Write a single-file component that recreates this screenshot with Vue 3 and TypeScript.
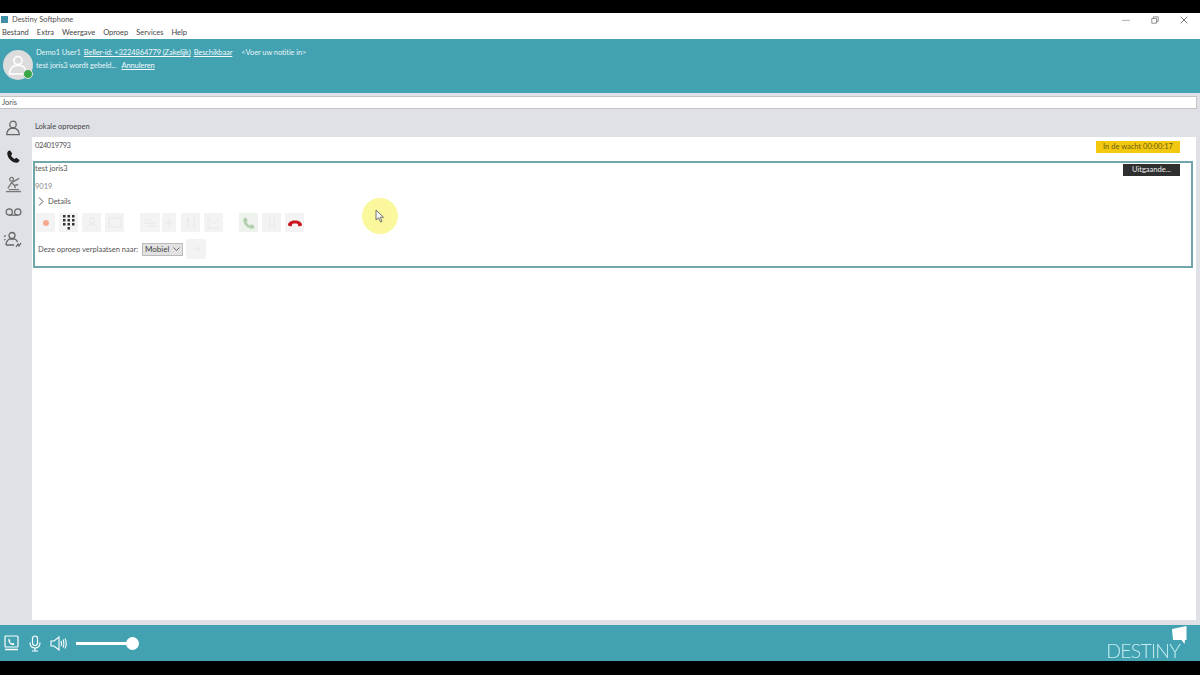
<script setup lang="ts">
const menus = ['Bestand', 'Extra', 'Weergave', 'Oproep', 'Services', 'Help']
</script>

<template>
  <div class="screen">
    <div class="letterbox top"></div>
    <div class="window">
      <div class="titlebar">
        <span class="app-icon"></span>
        <span class="app-title">Destiny Softphone</span>
        <div class="win-buttons">
          <svg width="8" height="8" viewBox="0 0 10 10"><path d="M0 5.5H10" stroke="#999" fill="none" /></svg>
          <svg width="8" height="8" viewBox="0 0 10 10"><path d="M1 3H7V9H1ZM3 3V1H9V7H7" stroke="#777" fill="none" /></svg>
          <svg width="8" height="8" viewBox="0 0 10 10"><path d="M1 1L9 9M9 1L1 9" stroke="#555" fill="none" /></svg>
        </div>
      </div>
      <nav class="menubar">
        <span v-for="m in menus" :key="m">{{ m }}</span>
      </nav>

      <header class="status">
        <div class="avatar">
          <svg width="22" height="22" viewBox="0 0 22 22">
            <circle cx="11" cy="6.5" r="4" fill="none" stroke="#fff" stroke-width="1.6" />
            <path d="M2.5 20c0-5 3-7.500 5.500-8.500h6c2.500 1 5.500 3.500 5.500 8.500z" fill="none" stroke="#fff" stroke-width="1.6" />
          </svg>
          <span class="presence"></span>
        </div>
        <div class="status-text">
          <div class="status-line first">
            <span>Demo1 User1</span>
            <a>Beller-id: +3224864779 (Zakelijk)</a>
            <a>Beschikbaar</a>
            <span class="note">&lt;Voer uw notitie in&gt;</span>
          </div>
          <div class="status-line second">
            <span>test joris3 wordt gebeld...</span>
            <a>Annuleren</a>
          </div>
        </div>
      </header>

      <div class="search-wrap">
        <div class="search">Joris</div>
      </div>

      <div class="main">
        <aside class="sidebar">
          <span class="side-slot">
            <svg width="16" height="16" viewBox="0 0 18 18">
              <circle cx="9" cy="5" r="3.600" fill="none" stroke="#666" stroke-width="1.400" />
              <path d="M2 16.500c0-4 2-6 4.500-7h5c2.500 1 4.500 3 4.500 7z" fill="none" stroke="#666" stroke-width="1.400" />
            </svg>
          </span>
          <span class="side-slot">
            <svg width="15" height="15" viewBox="0 0 24 24">
              <path d="M6.600 2.500 10 7.500 8 10.500c1 2.300 3.200 4.500 5.500 5.500l3-2 5 3.400c.3 1.800-1.700 4.600-4.500 4.600C9.500 21.500 2.500 14.500 2 7c0-2.500 2.500-4.800 4.600-4.500z" fill="#1d1d1d" />
            </svg>
          </span>
          <span class="side-slot">
            <svg width="17" height="17" viewBox="0 0 18 18">
              <path d="M1 16.500H17M4 14.500H15" stroke="#777" stroke-width="1.300" fill="none" />
              <circle cx="7" cy="3.500" r="2" fill="none" stroke="#777" stroke-width="1.300" />
              <path d="M3 13 7 7l3 3 4-1M8 6.500l7-4M11 13l-1-3" stroke="#777" stroke-width="1.400" fill="none" />
            </svg>
          </span>
          <span class="side-slot">
            <svg width="17" height="10" viewBox="0 0 18 10">
              <circle cx="4.500" cy="5" r="3.300" fill="none" stroke="#666" stroke-width="1.300" />
              <circle cx="13.500" cy="5" r="3.300" fill="none" stroke="#666" stroke-width="1.300" />
              <path d="M4.500 8.300H13.500" stroke="#666" stroke-width="1.300" />
            </svg>
          </span>
          <span class="side-slot">
            <svg width="20" height="18" viewBox="0 0 20 18">
              <circle cx="9" cy="4.500" r="3" fill="none" stroke="#666" stroke-width="1.300" />
              <path d="M3 14c0-3 1.500-5 3.500-6h5c1.500.6 2.500 1.500 3 3M3 14h8" fill="none" stroke="#666" stroke-width="1.300" />
              <path d="M1 5.500l2-1M1 9l1.500-.5M13 16l2-3 1 2 2-3" fill="none" stroke="#666" stroke-width="1.300" />
            </svg>
          </span>
        </aside>

        <section class="content">
          <div class="section-title">Lokale oproepen</div>
          <div class="panel">
            <div class="call-row">
              <span class="call-id">024019793</span>
              <span class="hold">In de wacht 00:00:17</span>
            </div>
            <div class="call-card">
              <div class="card-top">
                <span class="call-name">test joris3</span>
                <span class="outgoing">Uitgaande...</span>
              </div>
              <div class="call-number">9019</div>
              <div class="details">
                <svg width="6" height="9" viewBox="0 0 6 9"><path d="M1 .5 5 4.500 1 8.500" fill="none" stroke="#555" /></svg>
                <span>Details</span>
              </div>
              <div class="actions">
                <span class="btn"><i class="rec"></i></span>
                <span class="btn">
                  <svg width="12" height="16" viewBox="0 0 12 16" fill="#333">
                    <path d="M0 0h2.500v2.500H0zM4.500 0H7v2.500H4.500zM9 0h2.500v2.500H9zM0 4h2.500v2.500H0zM4.500 4H7v2.500H4.500zM9 4h2.500v2.500H9zM0 8h2.500v2.500H0zM4.500 8H7v2.500H4.500zM9 8h2.500v2.500H9zM4.500 12H7v2.500H4.500z" />
                  </svg>
                </span>
                <span class="btn">
                  <svg width="12" height="12" viewBox="0 0 12 12" class="faint"><circle cx="6" cy="3.500" r="2.500" /><path d="M1 11.500c0-3 2-4.500 5-4.500s5 1.500 5 4.500" /></svg>
                </span>
                <span class="btn gap-after">
                  <svg width="14" height="11" viewBox="0 0 14 11" class="faint"><rect x="1" y="1" width="12" height="9" /></svg>
                </span>
                <span class="btn wide">
                  <svg width="14" height="10" viewBox="0 0 14 10" class="faint"><path d="M1 5H13M1 2H9M5 8H13" /></svg>
                </span>
                <span class="btn narrow">
                  <svg width="8" height="8" viewBox="0 0 8 8" class="faint"><path d="M4 0V8M0 4H8" /></svg>
                </span>
                <span class="btn">
                  <svg width="12" height="14" viewBox="0 0 12 14" class="faint"><path d="M3 1V13M9 1V13M1 5H5M7 9H11" /></svg>
                </span>
                <span class="btn gap-after">
                  <svg width="13" height="12" viewBox="0 0 13 12" class="faint"><path d="M1 1V11H12M1 1L7 7L12 2" /></svg>
                </span>
                <span class="btn green">
                  <svg width="14" height="14" viewBox="0 0 24 24"><path d="M6.600 2.500 10 7.500 8 10.500c1 2.300 3.200 4.500 5.500 5.500l3-2 5 3.400c.3 1.800-1.700 4.600-4.500 4.600C9.500 21.500 2.500 14.500 2 7c0-2.500 2.500-4.800 4.600-4.500z" fill="#b4ceb0" /></svg>
                </span>
                <span class="btn">
                  <svg width="8" height="14" viewBox="0 0 8 14" class="faint"><path d="M2 1V13M6 1V13" /></svg>
                </span>
                <span class="btn">
                  <svg width="16" height="8" viewBox="0 0 16 8"><path d="M1 6.500C1 3 4 1.500 8 1.500s7 1.500 7 5l-3.500 1-.8-2.600C9.500 4.500 6.500 4.500 5.300 4.900L4.500 7.500z" fill="#c9141e" /></svg>
                </span>
              </div>
              <div class="transfer">
                <span class="transfer-label">Deze oproep verplaatsen naar:</span>
                <span class="select">Mobiel
                  <svg width="7" height="4" viewBox="0 0 7 4"><path d="M.5.500l3 3 3-3" fill="none" stroke="#666" /></svg>
                </span>
                <span class="btn">
                  <svg width="10" height="10" viewBox="0 0 10 10" class="faint"><path d="M1 5H9M6 2L9 5L6 8" /></svg>
                </span>
              </div>
            </div>
            <div class="marker">
              <svg width="10" height="14" viewBox="0 0 10 14"><path d="M1 1V11L3.500 8.800 5.500 13 7 12.300 5.200 8.300H8.500Z" fill="#f4f4f4" stroke="#666" stroke-width=".9" /></svg>
            </div>
          </div>
        </section>
      </div>

      <footer class="footer">
        <div class="controls">
          <svg width="15" height="16" viewBox="0 0 15 16" fill="none" stroke="#fff" stroke-width="1.200">
            <rect x="1" y="1" width="13" height="11" rx="1" />
            <path d="M1 14.500H14" stroke-width="1.500" />
            <path d="M5 3.500 6.500 5.500 5.800 6.500C6.300 7.500 7 8 8 8.500l1-.7 1.500 1.200C10 10.500 8.500 10.500 7 9.500 5 8.500 4 6.500 4.500 4z" fill="#fff" stroke="none" />
          </svg>
          <svg class="mic" width="12" height="17" viewBox="0 0 12 17" fill="none" stroke="#fff" stroke-width="1.200">
            <rect x="3.500" y="1" width="5" height="9.500" rx="2.500" />
            <path d="M1 7.500c0 3.500 2 5.500 5 5.500s5-2 5-5.500M6 13v3M3 16H9" />
          </svg>
          <svg class="speaker" width="17" height="15" viewBox="0 0 17 15" fill="none" stroke="#fff" stroke-width="1.100">
            <path d="M1 5H4L9 1V14L4 10H1Z" />
            <path d="M11 5c.7 1.500.7 3.500 0 5M13 3.500c1.100 2.500 1.100 5.500 0 8M15 2.500c1.500 3 1.500 7 0 10" />
          </svg>
          <div class="slider"><span class="knob"></span></div>
        </div>
        <div class="logo">
          <span class="logo-word">DESTINY</span>
          <svg class="logo-bubble" width="15" height="18" viewBox="0 0 15 18"><path d="M0 3 14.500 0V14L13 14 12.500 18 9.500 14H1Z" fill="#fff" /></svg>
        </div>
      </footer>
    </div>
    <div class="letterbox bottom"></div>
  </div>
</template>

<style scoped>
.screen {
  width: 1200px;
  height: 675px;
  display: flex;
  flex-direction: column;
  overflow: hidden;
  background: #000;
  font-family: Lato, "Open Sans", sans-serif;
  font-size: 7.5px;
  color: #444;
}
.letterbox.top { height: 13px; background: #000; flex-shrink: 0; }
.letterbox.bottom { height: 14px; background: #000; flex-shrink: 0; }
.window {
  flex: 1;
  display: flex;
  flex-direction: column;
  background: #fff;
  min-height: 0;
  filter: blur(0.45px);
}
.titlebar {
  height: 13px;
  display: flex;
  align-items: center;
  padding-left: 1px;
  flex-shrink: 0;
}
.app-icon {
  width: 7px;
  height: 7px;
  background: #3f8fa8;
  margin-right: 4px;
}
.app-title { color: #555; }
.win-buttons {
  margin-left: auto;
  display: flex;
  gap: 21px;
  padding-right: 12px;
}
.menubar {
  height: 13px;
  display: flex;
  gap: 8px;
  align-items: center;
  padding-left: 2px;
  flex-shrink: 0;
}
.status {
  height: 54px;
  box-sizing: border-box;
  background: #42a2b1;
  display: flex;
  padding: 11px 0 0 3px;
  flex-shrink: 0;
  color: #e6f4f6;
}
.avatar {
  position: relative;
  width: 30px;
  height: 30px;
  border-radius: 50%;
  background: #dcdcdc;
  display: flex;
  align-items: center;
  justify-content: center;
  margin-right: 3px;
}
.presence {
  position: absolute;
  right: 0;
  bottom: 1px;
  width: 8px;
  height: 8px;
  border-radius: 50%;
  background: #3aa648;
  border: 1px solid #e6e6e6;
}
.status-text {
  margin-top: -3px;
  display: flex;
  flex-direction: column;
  gap: 2px;
}
.status-line {
  display: flex;
  gap: 3px;
  line-height: 11px;
  letter-spacing: -0.1px;
  white-space: nowrap;
}
.status-line a { text-decoration: underline; color: #f2fafb; }
.status-line.second { gap: 5px; }
.note { margin-left: 6px; }
.search-wrap {
  height: 17px;
  padding: 3px 3px 1px 0;
  box-sizing: border-box;
  background: #dfe1e6;
  flex-shrink: 0;
}
.search {
  height: 13px;
  line-height: 11px;
  box-sizing: border-box;
  background: #fff;
  border: 1px solid #c4c4c4;
  border-left: none;
  padding-left: 2px;
  color: #555;
}
.main {
  flex: 1;
  display: flex;
  min-height: 0;
  background: #dfe1e6;
}
.sidebar {
  width: 32px;
  flex-shrink: 0;
  display: flex;
  flex-direction: column;
  padding: 4px 6px 0 0;
  box-sizing: border-box;
}
.side-slot {
  height: 28px;
  display: flex;
  align-items: center;
  justify-content: center;
}
.content {
  flex: 1;
  display: flex;
  flex-direction: column;
  min-width: 0;
}
.section-title {
  height: 27px;
  line-height: 34px;
  padding-left: 3px;
  flex-shrink: 0;
}
.panel {
  position: relative;
  flex: 1;
  background: #fff;
  margin-bottom: 5px;
  margin-right: 4px;
}
.call-row {
  height: 24px;
  display: flex;
  justify-content: space-between;
  padding: 4px 16px 0 3px;
  box-sizing: border-box;
  align-items: flex-start;
  color: #555;
}
.call-id { line-height: 9px; letter-spacing: -0.4px; }
.hold {
  width: 84px;
  height: 12px;
  line-height: 12px;
  text-align: center;
  background: #f3c90f;
  color: #6b5a10;
}
.call-card {
  height: 107px;
  box-sizing: border-box;
  border: 2px solid #72a6ad;
  margin-right: 3px;
  margin-left: 1px;
  color: #555;
}
.card-top {
  display: flex;
  justify-content: space-between;
  align-items: flex-start;
  height: 19px;
}
.call-name { line-height: 10px; margin-top: 1px; }
.outgoing {
  width: 57px;
  height: 12px;
  line-height: 12px;
  text-align: center;
  background: #2f2f2f;
  color: #eee;
  margin: 1px 11px 0 0;
}
.call-number { color: #888; line-height: 10px; }
.details {
  display: flex;
  align-items: center;
  gap: 4px;
  padding-left: 3px;
  height: 12px;
  margin-top: 3px;
}
.actions {
  display: flex;
  gap: 4px;
  margin-top: 6px;
  padding-left: 1px;
}
.btn {
  width: 19px;
  height: 19px;
  background: #f3f3f3;
  display: flex;
  align-items: center;
  justify-content: center;
  flex-shrink: 0;
}
.btn.wide { width: 20px; margin-right: -2px; }
.btn.narrow { width: 14px; margin-right: 1px; }
.gap-after { margin-right: 12px; }
.btn.green { background: #eef3ee; }
.faint { fill: none; stroke: #e8e8e8; stroke-width: 1; }
.rec {
  width: 6px;
  height: 6px;
  border-radius: 50%;
  background: #f4a98e;
}
.transfer {
  display: flex;
  align-items: center;
  margin-top: 7px;
  padding-left: 3px;
}
.transfer-label { width: 104px; white-space: nowrap; flex-shrink: 0; }
.select {
  width: 41px;
  height: 13px;
  box-sizing: border-box;
  border: 1px solid #bbb;
  background: #e2e2e2;
  display: flex;
  align-items: center;
  justify-content: space-between;
  padding: 0 2px 0 2px;
  color: #444;
  font-size: 8px;
  margin-right: 3px;
}
.transfer .btn { width: 20px; height: 20px; }
.marker {
  position: absolute;
  left: 330px;
  top: 61px;
  width: 36px;
  height: 36px;
  border-radius: 50%;
  background: #fbf79c;
  display: flex;
  align-items: center;
  justify-content: center;
}
.footer {
  height: 36px;
  flex-shrink: 0;
  background: #42a2b1;
  display: flex;
  justify-content: space-between;
  align-items: center;
  padding: 0 20px 0 4px;
}
.controls {
  display: flex;
  align-items: center;
}
.mic { margin-left: 10px; }
.speaker { margin-left: 9px; }
.slider {
  position: relative;
  width: 56px;
  height: 3px;
  background: #fff;
  margin-left: 9px;
}
.knob {
  position: absolute;
  right: -7px;
  top: -5px;
  width: 13px;
  height: 13px;
  border-radius: 50%;
  background: #fff;
}
.logo {
  position: relative;
  align-self: flex-end;
}
.logo-word {
  font-family: Lato, "Liberation Sans", sans-serif;
  font-weight: 300;
  font-size: 19.5px;
  letter-spacing: -0.8px;
  line-height: 20px;
  color: #c4eef2;
  display: block;
}
.logo-bubble {
  position: absolute;
  right: -7px;
  top: -15px;
}
</style>

<style>
body { margin: 0; background: #000; }
</style>
